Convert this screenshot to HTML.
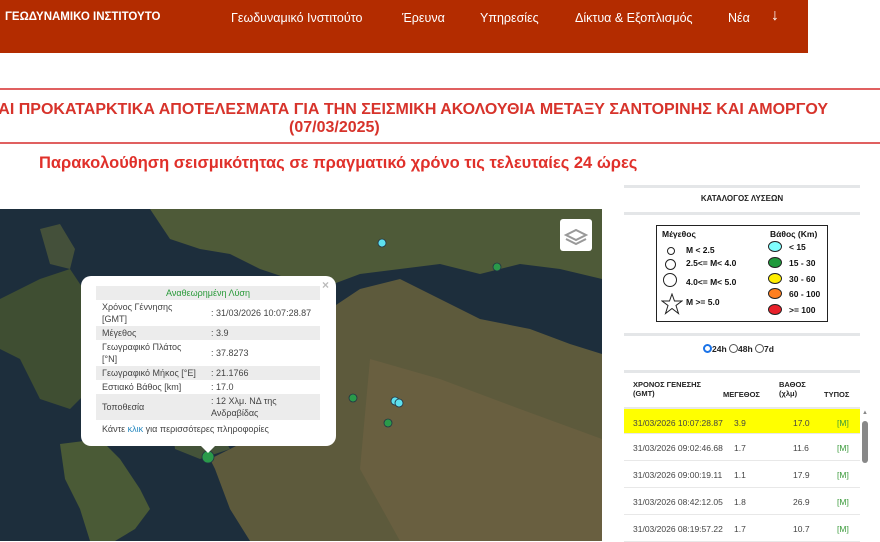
<!DOCTYPE html>
<html><head><meta charset="utf-8"><style>
*{margin:0;padding:0;box-sizing:border-box}
body{width:880px;height:541px;overflow:hidden;background:#fff;font-family:"Liberation Sans","DejaVu Sans",sans-serif;position:relative}
.abs{position:absolute}
.hdr{left:0;top:0;width:808px;height:53px;background:#b32c00}
.hdr span{position:absolute;top:11px;color:#fff;font-size:12.5px}
.rl{left:0;width:880px;height:2px;background:#e06060}
.ttl{color:#d7332b;font-weight:bold;font-size:16px;white-space:nowrap}
.gl{left:624px;width:236px;height:3px;background:#e4e6e8}
.pt{table-layout:fixed}
.pt td{font-size:9px;color:#444;padding:1px 6px;vertical-align:middle;line-height:12px;white-space:nowrap;overflow:hidden}
.pt tr.g td{background:#ececec}
.row{left:624px;width:236px;height:27px;border-bottom:1px solid #e8e8e8;font-size:8.5px;color:#444}
.row span{position:absolute;top:9px}
.lg{font-size:8.5px;font-weight:bold;color:#111}
</style></head><body>
<div class="abs hdr">
<span style="left:5px;font-weight:bold;font-size:11.5px">ΓΕΩΔΥΝΑΜΙΚΟ ΙΝΣΤΙΤΟΥΤΟ</span>
<span style="left:231px">Γεωδυναμικό Ινστιτούτο</span>
<span style="left:402px">Έρευνα</span>
<span style="left:480px">Υπηρεσίες</span>
<span style="left:575px">Δίκτυα &amp; Εξοπλισμός</span>
<span style="left:728px">Νέα</span>
<span style="left:771px;font-size:16px;top:7px">↓</span>
</div>
<div class="abs rl" style="top:88px"></div>
<div class="abs ttl" style="top:101px;right:52px">ΚΑΙ ΠΡΟΚΑΤΑΡΚΤΙΚΑ ΑΠΟΤΕΛΕΣΜΑΤΑ ΓΙΑ ΤΗΝ ΣΕΙΣΜΙΚΗ ΑΚΟΛΟΥΘΙΑ ΜΕΤΑΞΥ ΣΑΝΤΟΡΙΝΗΣ ΚΑΙ ΑΜΟΡΓΟΥ</div>
<div class="abs ttl" style="top:119px;left:289px">(07/03/2025)</div>
<div class="abs rl" style="top:142px"></div>
<div class="abs" style="left:39px;top:154px;color:#e0302a;font-size:16.5px;font-weight:bold;white-space:nowrap">Παρακολούθηση σεισμικότητας σε πραγματικό χρόνο τις τελευταίες 24 ώρες</div>

<svg class="abs" style="left:0;top:209px" width="602" height="332" viewBox="0 0 602 332">
<rect width="602" height="332" fill="#1d2e3c"/>
<path d="M150 0 L602 0 L602 70 L560 60 L520 55 L480 65 L440 55 L400 60 L360 65 L320 80 L290 70 L260 60 L230 45 L200 40 L170 30 Z" fill="#4e5a38"/>
<path d="M330 100 L360 80 L400 70 L440 90 L480 110 L530 120 L570 135 L602 145 L602 332 L250 332 L230 300 L215 260 L210 250 L240 235 L280 220 L320 180 Z" fill="#5d5a3c"/>
<path d="M370 150 L440 170 L520 200 L602 230 L602 332 L400 332 L360 260 Z" fill="#695f40"/>
<path d="M0 90 L40 70 L70 60 L90 90 L100 130 L90 180 L70 200 L40 190 L20 150 L0 140 Z" fill="#3f4e32"/>
<path d="M40 20 L60 15 L75 40 L70 60 L50 55 Z" fill="#44503a"/>
<path d="M60 235 L100 230 L120 250 L140 280 L150 300 L135 320 L115 332 L90 332 L80 300 L65 270 Z" fill="#4a5a36"/>
<path d="M170 200 L210 205 L230 240 L200 250 L175 240 Z" fill="#4f5c38" opacity="0.8"/>
<rect x="560" y="10" width="32" height="32" rx="3" fill="#fff"/>
<path d="M566 26 L576 21 L586 26 L576 31 Z M566 30 L576 35 L586 30" fill="none" stroke="#999" stroke-width="2"/>
<circle cx="382" cy="34" r="4" fill="#5de0ee" stroke="#234" stroke-width="0.8"/>
<circle cx="497" cy="58" r="4" fill="#2a9a4a" stroke="#234" stroke-width="0.8"/>
<circle cx="353" cy="189" r="4" fill="#2a9a4a" stroke="#234" stroke-width="0.8"/>
<circle cx="395" cy="192" r="4" fill="#5de0ee" stroke="#234" stroke-width="0.8"/>
<circle cx="399" cy="194" r="4" fill="#5de0ee" stroke="#234" stroke-width="0.8"/>
<circle cx="388" cy="214" r="4" fill="#2a9a4a" stroke="#234" stroke-width="0.8"/>
<circle cx="208" cy="248" r="6" fill="#2a9a4a" stroke="#234" stroke-width="0.8"/>
</svg>

<div class="abs" style="left:81px;top:276px;width:255px;height:170px;background:#fff;border-radius:10px"></div>
<div class="abs" style="left:200px;top:445px;width:0;height:0;border-left:8px solid transparent;border-right:8px solid transparent;border-top:8px solid #fff"></div>
<div class="abs" style="left:322px;top:278px;color:#bbb;font-size:12px;font-weight:bold">×</div>
<table class="abs pt" style="left:96px;top:286px;width:224px;border-collapse:collapse">
<col style="width:111px"><col style="width:113px">
<tr class="g"><td colspan="2" style="text-align:center;color:#2a9a3a">Αναθεωρημένη Λύση</td></tr>
<tr><td>Χρόνος Γέννησης<br>[GMT]</td><td style="padding-left:4px">: 31/03/2026 10:07:28.87</td></tr>
<tr class="g"><td>Μέγεθος</td><td style="padding-left:4px">: 3.9</td></tr>
<tr><td>Γεωγραφικό Πλάτος<br>[°N]</td><td style="padding-left:4px">: 37.8273</td></tr>
<tr class="g"><td>Γεωγραφικό Μήκος [°E]</td><td style="padding-left:4px">: 21.1766</td></tr>
<tr><td>Εστιακό Βάθος [km]</td><td style="padding-left:4px">: 17.0</td></tr>
<tr class="g"><td>Τοποθεσία</td><td style="padding-left:4px">: 12 Χλμ. ΝΔ της<br>Ανδραβίδας</td></tr>
<tr><td colspan="2" style="padding-top:3px">Κάντε <span style="color:#2a8ac0">κλικ</span> για περισσότερες πληροφορίες</td></tr>
</table>

<div class="abs gl" style="top:185px"></div>
<div class="abs" style="left:624px;top:194px;width:236px;text-align:center;font-size:8px;font-weight:bold;color:#222">ΚΑΤΑΛΟΓΟΣ ΛΥΣΕΩΝ</div>
<div class="abs gl" style="top:212px"></div>
<div class="abs" style="left:656px;top:225px;width:172px;height:97px;border:1.5px solid #222"></div>
<div class="abs lg" style="left:662px;top:229px">Μέγεθος</div>
<div class="abs lg" style="left:770px;top:229px">Βάθος (Km)</div>
<div class="abs" style="left:667px;top:247px;width:8px;height:8px;border:1px solid #222;border-radius:50%"></div>
<div class="abs lg" style="left:686px;top:245px">M &lt; 2.5</div>
<div class="abs" style="left:665px;top:259px;width:11px;height:11px;border:1px solid #222;border-radius:50%"></div>
<div class="abs lg" style="left:686px;top:258px">2.5&lt;= M&lt; 4.0</div>
<div class="abs" style="left:663px;top:273px;width:14px;height:14px;border:1px solid #222;border-radius:50%"></div>
<div class="abs lg" style="left:686px;top:277px">4.0&lt;= M&lt; 5.0</div>
<svg class="abs" style="left:661px;top:293px" width="22" height="22" viewBox="0 0 22 22"><path d="M11 1 L13.5 8 L21 8 L15 12.5 L17.5 20.5 L11 15.5 L4.5 20.5 L7 12.5 L1 8 L8.5 8 Z" fill="none" stroke="#222" stroke-width="1"/></svg>
<div class="abs lg" style="left:686px;top:297px">M &gt;= 5.0</div>
<div class="abs" style="left:768px;top:241px;width:14px;height:11px;border:1px solid #222;border-radius:50%;background:#80ffff"></div>
<div class="abs lg" style="left:789px;top:242px">&lt; 15</div>
<div class="abs" style="left:768px;top:257px;width:14px;height:11px;border:1px solid #222;border-radius:50%;background:#1f9a3c"></div>
<div class="abs lg" style="left:789px;top:258px">15 - 30</div>
<div class="abs" style="left:768px;top:273px;width:14px;height:11px;border:1px solid #222;border-radius:50%;background:#ffee00"></div>
<div class="abs lg" style="left:789px;top:274px">30 - 60</div>
<div class="abs" style="left:768px;top:288px;width:14px;height:11px;border:1px solid #222;border-radius:50%;background:#ff7f20"></div>
<div class="abs lg" style="left:789px;top:289px">60 - 100</div>
<div class="abs" style="left:768px;top:304px;width:14px;height:11px;border:1px solid #222;border-radius:50%;background:#e8202a"></div>
<div class="abs lg" style="left:789px;top:305px">&gt;= 100</div>
<div class="abs gl" style="top:333px"></div>
<div class="abs" style="left:703px;top:344px;font-size:8.5px;font-weight:bold;color:#222">
<span style="display:inline-block;width:9px;height:9px;border-radius:50%;border:2.5px solid #1a73e8;vertical-align:-1px"></span>24h <span style="display:inline-block;width:9px;height:9px;border-radius:50%;border:1px solid #555;vertical-align:-1px"></span>48h <span style="display:inline-block;width:9px;height:9px;border-radius:50%;border:1px solid #555;vertical-align:-1px"></span>7d</div>
<div class="abs gl" style="top:370px"></div>
<div class="abs" style="left:633px;top:380px;font-size:7.5px;font-weight:bold;color:#222;line-height:9px">ΧΡΟΝΟΣ ΓΕΝΕΣΗΣ<br>(GMT)</div>
<div class="abs" style="left:723px;top:390px;font-size:7.5px;font-weight:bold;color:#222">ΜΕΓΕΘΟΣ</div>
<div class="abs" style="left:779px;top:380px;font-size:7.5px;font-weight:bold;color:#222;line-height:9px">ΒΑΘΟΣ<br>(χλμ)</div>
<div class="abs" style="left:824px;top:390px;font-size:7.5px;font-weight:bold;color:#222">ΤΥΠΟΣ</div>
<div class="abs row" style="top:407px;background:#ffff00;border-top:2px solid #e8e8e8"><span style="left:9px">31/03/2026 10:07:28.87</span><span style="left:110px">3.9</span><span style="left:169px">17.0</span><span style="left:213px;color:#3a9a3a">[M]</span></div>
<div class="abs row" style="top:434px"><span style="left:9px">31/03/2026 09:02:46.68</span><span style="left:110px">1.7</span><span style="left:169px">11.6</span><span style="left:213px;color:#3a9a3a">[M]</span></div>
<div class="abs row" style="top:461px"><span style="left:9px">31/03/2026 09:00:19.11</span><span style="left:110px">1.1</span><span style="left:169px">17.9</span><span style="left:213px;color:#3a9a3a">[M]</span></div>
<div class="abs row" style="top:488px"><span style="left:9px">31/03/2026 08:42:12.05</span><span style="left:110px">1.8</span><span style="left:169px">26.9</span><span style="left:213px;color:#3a9a3a">[M]</span></div>
<div class="abs row" style="top:515px"><span style="left:9px">31/03/2026 08:19:57.22</span><span style="left:110px">1.7</span><span style="left:169px">10.7</span><span style="left:213px;color:#3a9a3a">[M]</span></div>
<div class="abs" style="left:862px;top:410px;font-size:6px;color:#888">▲</div>
<div class="abs" style="left:862px;top:421px;width:6px;height:42px;background:#888;border-radius:3px"></div>
</body></html>
